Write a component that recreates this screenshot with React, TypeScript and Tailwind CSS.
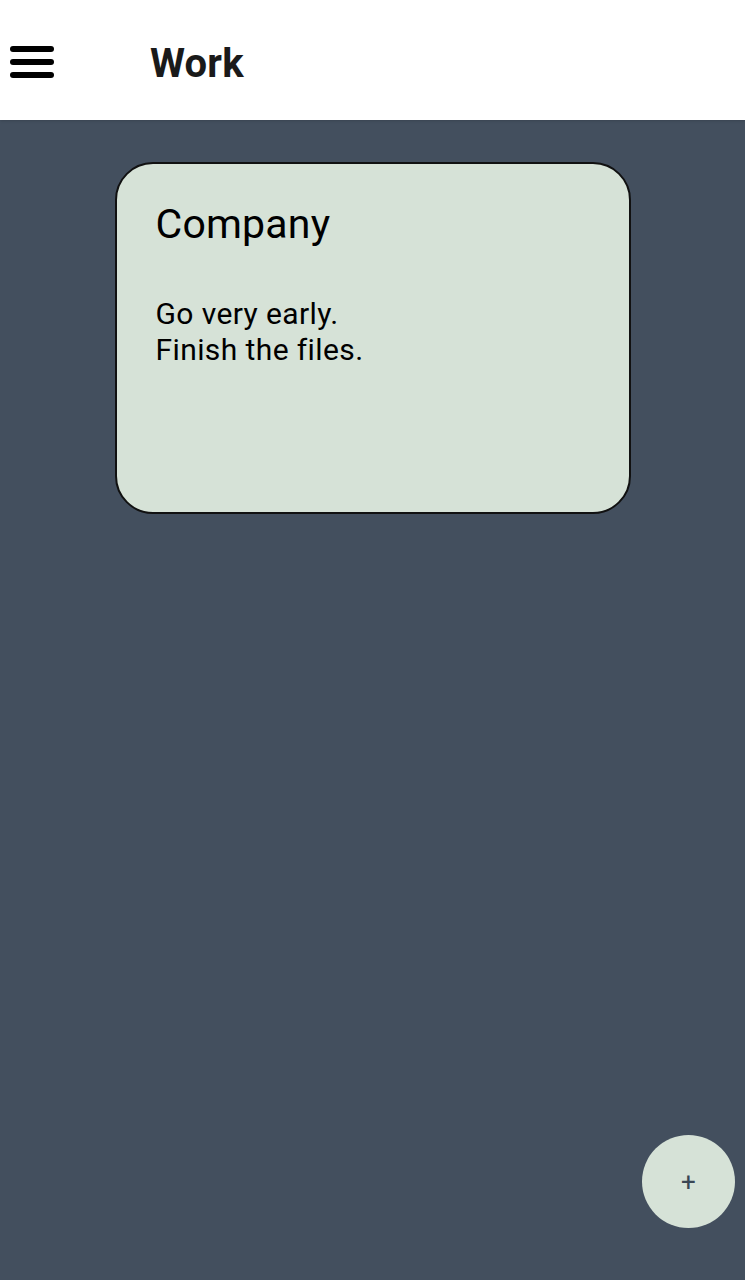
import React from 'react';

const Hamburger: React.FC = () => (
  <svg width="44" height="32" viewBox="0 0 44 32" aria-hidden="true">
    <rect x="0" y="0" width="44" height="6" rx="3" fill="#000" />
    <rect x="0" y="13" width="44" height="6" rx="3" fill="#000" />
    <rect x="0" y="26" width="44" height="6" rx="3" fill="#000" />
  </svg>
);

const App: React.FC = () => {
  return (
    <div className="min-h-screen bg-[#434f5e] font-['Roboto',sans-serif]">
      {/* Top bar */}
      <header className="h-[120px] bg-white flex items-center shadow-sm">
        <button className="ml-[10px] mt-[4px]">
          <Hamburger />
        </button>
        <h1 className="ml-[96px] mt-[8px] text-[40px] font-bold text-[#1a1a1a] leading-none tracking-[0.2px]">Work</h1>
      </header>

      {/* Notes */}
      <main className="flex justify-center pt-[42px]">
        <div className="w-[516px] h-[352px] bg-[#d6e2d7] border-2 border-[#111] rounded-[38px] px-[39px] pt-[36px]">
          <h2 className="text-[41px] leading-[48px] text-black tracking-[0.2px]">Company</h2>
          <p className="mt-[48px] text-[30px] leading-[36px] text-black tracking-[0.4px]">
            Go very early.
            <br />
            Finish the files.
          </p>
        </div>
      </main>

      {/* Add button */}
      <button className="fixed right-[10px] bottom-[52px] w-[93px] h-[93px] rounded-full bg-[#d6e2d7] flex items-center justify-center text-[#3a4654] text-[26px] leading-none">
        +
      </button>
    </div>
  );
};

export default App;
